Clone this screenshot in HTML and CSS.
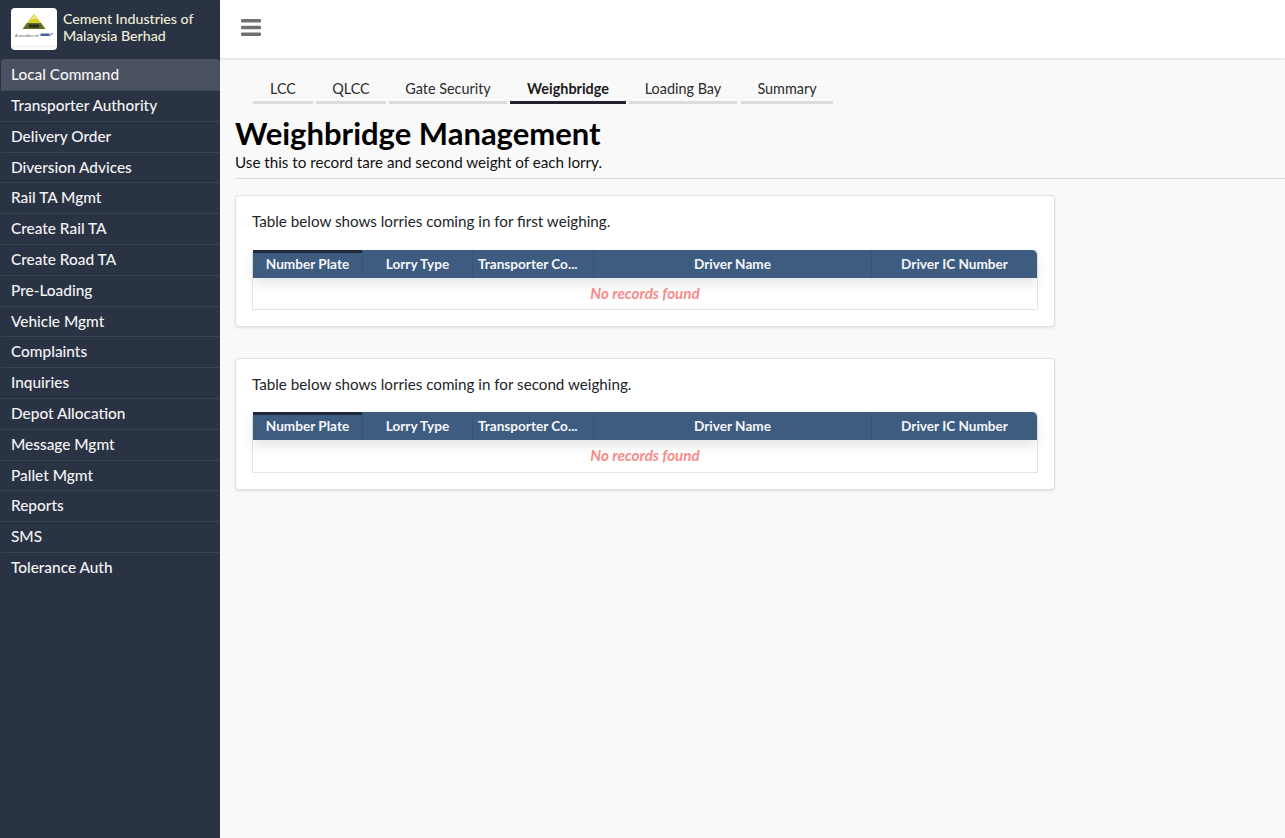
FILE: index.html
```html
<!DOCTYPE html>
<html lang="en">
<head>
<meta charset="utf-8">
<title>Weighbridge Management</title>
<link rel="stylesheet" href="styles.css">
</head>
<body>
<div class="app">
  <aside class="sidebar">
    <div class="brand">
      <div class="logo">
        <svg width="46" height="42" viewBox="0 0 46 42">
          <path d="M23 6 L35 21 L11 21 Z" fill="#d9cf2e"/>
          <path d="M23 7 L26 11 L20 11 Z" fill="#ece77a"/>
          <path d="M16 15 H30 L34 21 H12 Z" fill="#5f6b2c"/>
          <rect x="18" y="16.5" width="10" height="3" fill="#262d1a"/>
          <text x="4" y="28.5" class="logo-note">A member of</text>
          <rect x="29.5" y="25.5" width="9" height="2.5" fill="#4a5f9a"/>
          <path d="M38 28 L42 25" stroke="#7d93c9" stroke-width="1.2"/>
          <rect x="0" y="38" width="46" height="1" fill="#ececec"/>
        </svg>
      </div>
      <div class="brand-name">Cement Industries of Malaysia Berhad</div>
    </div>
    <nav class="menu">
      <a class="menu-item active">Local Command</a>
      <a class="menu-item">Transporter Authority</a>
      <a class="menu-item">Delivery Order</a>
      <a class="menu-item">Diversion Advices</a>
      <a class="menu-item">Rail TA Mgmt</a>
      <a class="menu-item">Create Rail TA</a>
      <a class="menu-item">Create Road TA</a>
      <a class="menu-item">Pre-Loading</a>
      <a class="menu-item">Vehicle Mgmt</a>
      <a class="menu-item">Complaints</a>
      <a class="menu-item">Inquiries</a>
      <a class="menu-item">Depot Allocation</a>
      <a class="menu-item">Message Mgmt</a>
      <a class="menu-item">Pallet Mgmt</a>
      <a class="menu-item">Reports</a>
      <a class="menu-item">SMS</a>
      <a class="menu-item">Tolerance Auth</a>
    </nav>
  </aside>
  <div class="main">
    <header class="topbar">
      <svg class="burger" width="20" height="17" viewBox="0 0 20 17">
        <rect x="0" y="0" width="20" height="3.6" rx="1" fill="#707070"/>
        <rect x="0" y="6.7" width="20" height="3.6" rx="1" fill="#707070"/>
        <rect x="0" y="13.4" width="20" height="3.6" rx="1" fill="#707070"/>
      </svg>
    </header>
    <div class="content">
      <div class="tabs">
        <a class="tab tab-lcc">LCC</a>
        <a class="tab tab-qlcc">QLCC</a>
        <a class="tab tab-gate">Gate Security</a>
        <a class="tab tab-wb active">Weighbridge</a>
        <a class="tab tab-load">Loading Bay</a>
        <a class="tab tab-sum">Summary</a>
      </div>
      <h1 class="title">Weighbridge Management</h1>
      <p class="subtitle">Use this to record tare and second weight of each lorry.</p>
      <hr class="rule">
      <section class="card">
        <p class="card-text">Table below shows lorries coming in for first weighing.</p>
        <div class="table">
          <div class="thead">
            <div class="th col-plate sorted">Number Plate</div>
            <div class="th col-type">Lorry Type</div>
            <div class="th col-trans">Transporter Co...</div>
            <div class="th col-name">Driver Name</div>
            <div class="th col-ic">Driver IC Number</div>
          </div>
          <div class="empty">No records found</div>
        </div>
      </section>
      <section class="card">
        <p class="card-text">Table below shows lorries coming in for second weighing.</p>
        <div class="table">
          <div class="thead">
            <div class="th col-plate sorted">Number Plate</div>
            <div class="th col-type">Lorry Type</div>
            <div class="th col-trans">Transporter Co...</div>
            <div class="th col-name">Driver Name</div>
            <div class="th col-ic">Driver IC Number</div>
          </div>
          <div class="empty">No records found</div>
        </div>
      </section>
    </div>
  </div>
</div>
</body>
</html>
```
FILE: styles.css
```css
* { box-sizing: border-box; }
html, body { margin: 0; height: 100%; }
body {
  font-family: Lato, "Liberation Sans", sans-serif;
  background: #f9f9f9;
  color: #212529;
  overflow: hidden;
}
.app { display: flex; height: 838px; }
.sidebar {
  width: 220px;
  flex: none;
  background: #2a3344;
  padding-left: 1px;
}
.brand {
  height: 59px;
  display: flex;
  align-items: flex-start;
  padding: 8px 0 0 10px;
  gap: 6px;
}
.logo {
  width: 46px;
  height: 42px;
  background: #fff;
  border-radius: 4px;
  flex: none;
}
.logo svg { display: block; }
.logo-note { font-size: 4.2px; fill: #55555d; font-family: Lato, sans-serif; }
.brand-name {
  color: #f2edd7;
  font-size: 14.2px;
  line-height: 17px;
  width: 145px;
  padding-top: 2px;
  font-weight: 500;
}
.menu { display: flex; flex-direction: column; }
.menu-item {
  display: block;
  height: 30.8px;
  line-height: 29px;
  padding-left: 10px;
  color: #f4f4f4;
  font-size: 15.4px;
  font-weight: 500;
  border-bottom: 1px solid #3a4354;
}
.menu-item.active {
  height: 32px;
  line-height: 31px;
  background: #4a5160;
  border-bottom: 1px solid #414957;
  border-radius: 4px 4px 0 0;
}
.menu-item:last-child { border-bottom: 0; }
.main { flex: 1; min-width: 0; display: flex; flex-direction: column; }
.topbar {
  height: 58px;
  background: #fff;
  box-shadow: 0 1px 2px rgba(0,0,0,.12);
  display: flex;
  align-items: flex-start;
  padding: 19px 0 0 21px;
  flex: none;
}
.content { padding: 20px 0 0 15px; flex: 1; }
.tabs { display: flex; gap: 3px; padding-left: 18px; height: 26px; }
.tab {
  height: 26px;
  text-align: center;
  font-size: 14.4px;
  line-height: 22px;
  color: #2b2b2b;
  border-bottom: 3px solid #dcdcdc;
}
.tab-lcc { width: 60px; }
.tab-qlcc { width: 70px; }
.tab-gate { width: 118px; }
.tab-wb { width: 116px; }
.tab-load { width: 108px; margin-right: 1px; }
.tab-sum { width: 92px; }
.tab.active { font-weight: 700; color: #1b1b1b; border-bottom-color: #212529; }
.title {
  margin: 11px 0 0;
  font-size: 31px;
  line-height: 37px;
  font-weight: 700;
  color: #000;
}
.subtitle {
  margin: 0;
  padding-top: 1px;
  font-size: 15.2px;
  line-height: 18px;
  color: #111;
}
.rule {
  margin: 7px 0 16px;
  border: 0;
  border-top: 1px solid #dcdcdc;
}
.card {
  width: 820px;
  height: 132px;
  margin-bottom: 30.8px;
  background: #fff;
  border: 1px solid #e0e0e0;
  border-radius: 4px;
  box-shadow: 0 1px 3px rgba(0,0,0,.1);
  padding: 15px 16px 0;
}
.card-text {
  margin: 0 0 18.6px;
  font-size: 15.2px;
  line-height: 20px;
  color: #212529;
}
.table {
  width: 786px;
  height: 60.6px;
  border: 1px solid #e3e3e3;
  border-top-color: #dcdcdc;
  border-radius: 4px 4px 0 0;
  background: #fff;
}
.thead {
  display: flex;
  height: 28px;
  margin-top: -1px;
  background: #3e5c80;
  border-radius: 0 5px 0 0;
  box-shadow: 0 6px 12px rgba(0,0,0,.1);
  position: relative;
}
.th {
  color: #f4f6fa;
  font-size: 13.6px;
  font-weight: 700;
  line-height: 29.6px;
  text-align: center;
  border-right: 1px solid #385374;
  white-space: nowrap;
  overflow: hidden;
}
.th:last-child { border-right: 0; }
.th.sorted { box-shadow: inset 0 3px 0 #1e2a3c; }
.col-plate { width: 110px; }
.col-type { width: 110px; }
.col-trans { width: 121px; text-align: left; padding-left: 5px; }
.col-name { width: 278px; }
.col-ic { width: 165px; }
.empty {
  text-align: center;
  font-size: 15.2px;
  font-weight: 700;
  font-style: italic;
  color: #fb8a8a;
  line-height: 31.6px;
}
```
